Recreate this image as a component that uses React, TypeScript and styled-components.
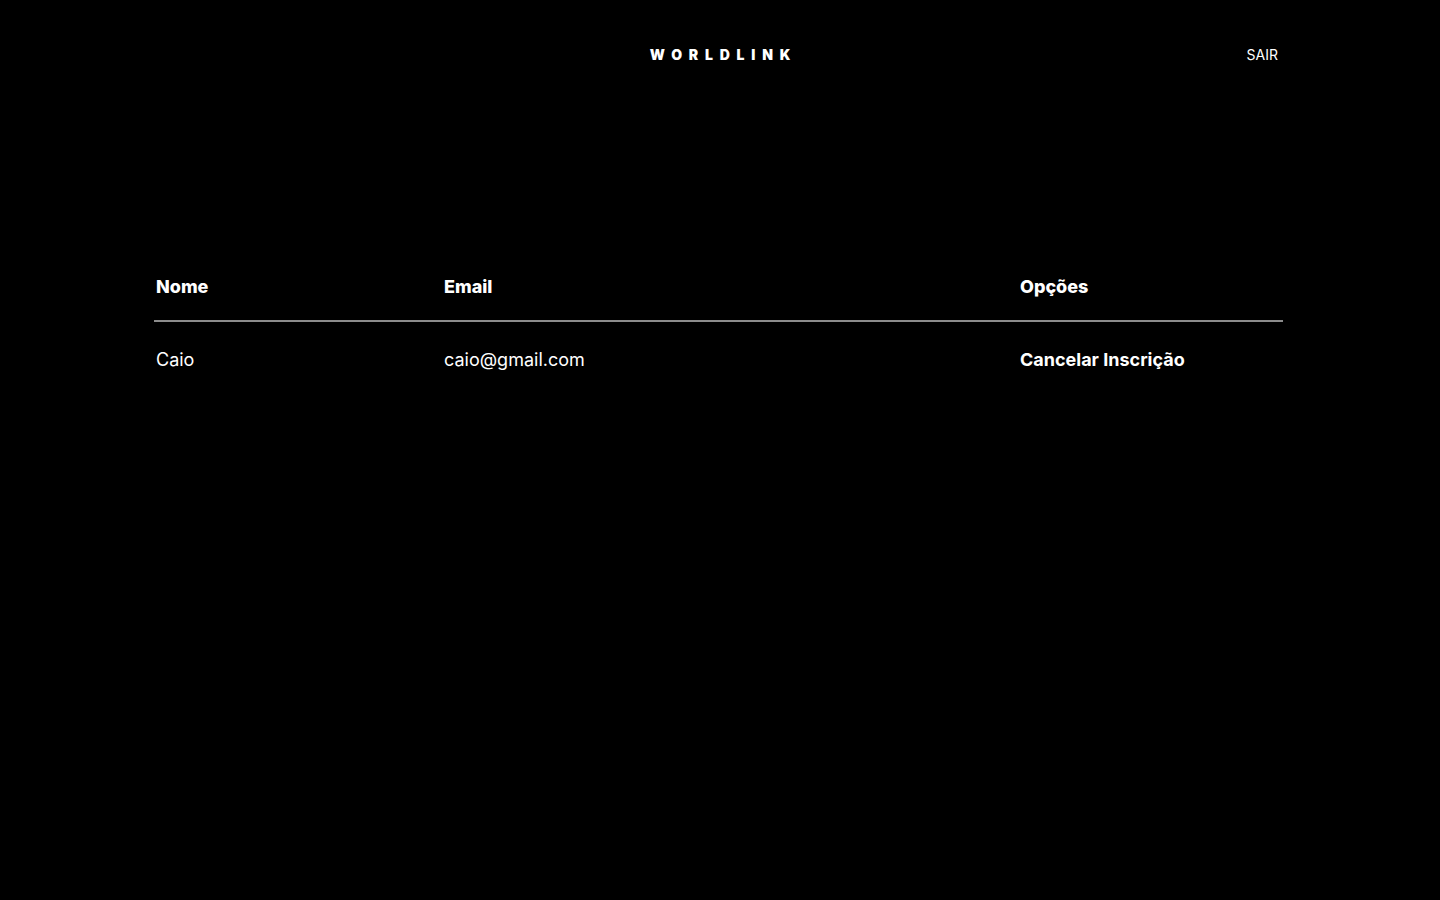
import React from 'react';
import styled, { createGlobalStyle } from 'styled-components';

interface Subscriber {
  name: string;
  email: string;
}

const subscribers: Subscriber[] = [{ name: 'Caio', email: 'caio@gmail.com' }];

const GlobalStyle = createGlobalStyle`
  html, body {
    margin: 0;
    padding: 0;
    background: #000;
    color: #fff;
    font-family: Inter, "Noto Sans", sans-serif;
  }
`;

const Page = styled.div`
  min-height: 900px;
  background: #000;
`;

const Header = styled.header`
  display: grid;
  grid-template-columns: 1fr auto 1fr;
  align-items: center;
  width: 1128px;
  margin: 0 auto;
  padding-top: 43px;
  height: 20px;
`;

const Logo = styled.h1`
  grid-column: 2;
  margin: 2px 0 0 7px;
  font-size: 14px;
  font-weight: 900;
  letter-spacing: 6.8px;
  line-height: 20px;
`;

const Logout = styled.a`
  justify-self: end;
  margin-right: 6px;
  font-size: 14px;
  color: #fff;
  text-decoration: none;
  cursor: pointer;
`;

const Table = styled.div`
  width: 1129px;
  margin: 213px 0 0 calc(50% - 566px);
`;

const Row = styled.div<{ $head?: boolean }>`
  display: grid;
  grid-template-columns: 288px 576px 265px;
  padding-left: 2px;
  align-items: center;
  border-bottom: ${({ $head }) => ($head ? '2px solid #8c8c8c' : 'none')};
`;

const HeadCell = styled.div`
  font-size: 18px;
  font-weight: 800;
  line-height: 22px;
  padding-bottom: 22px;
`;

const Cell = styled.div<{ $strong?: boolean }>`
  font-size: 18px;
  font-weight: ${({ $strong }) => ($strong ? 700 : 400)};
  line-height: 22px;
  padding-top: 27px;
`;

const App: React.FC = () => (
  <Page>
    <GlobalStyle />
    <Header>
      <Logo>WORLDLINK</Logo>
      <Logout>SAIR</Logout>
    </Header>
    <Table>
      <Row $head>
        <HeadCell>Nome</HeadCell>
        <HeadCell>Email</HeadCell>
        <HeadCell>Opções</HeadCell>
      </Row>
      {subscribers.map(({ name, email }) => (
        <Row key={email}>
          <Cell>{name}</Cell>
          <Cell>{email}</Cell>
          <Cell $strong>Cancelar Inscrição</Cell>
        </Row>
      ))}
    </Table>
  </Page>
);

export default App;
